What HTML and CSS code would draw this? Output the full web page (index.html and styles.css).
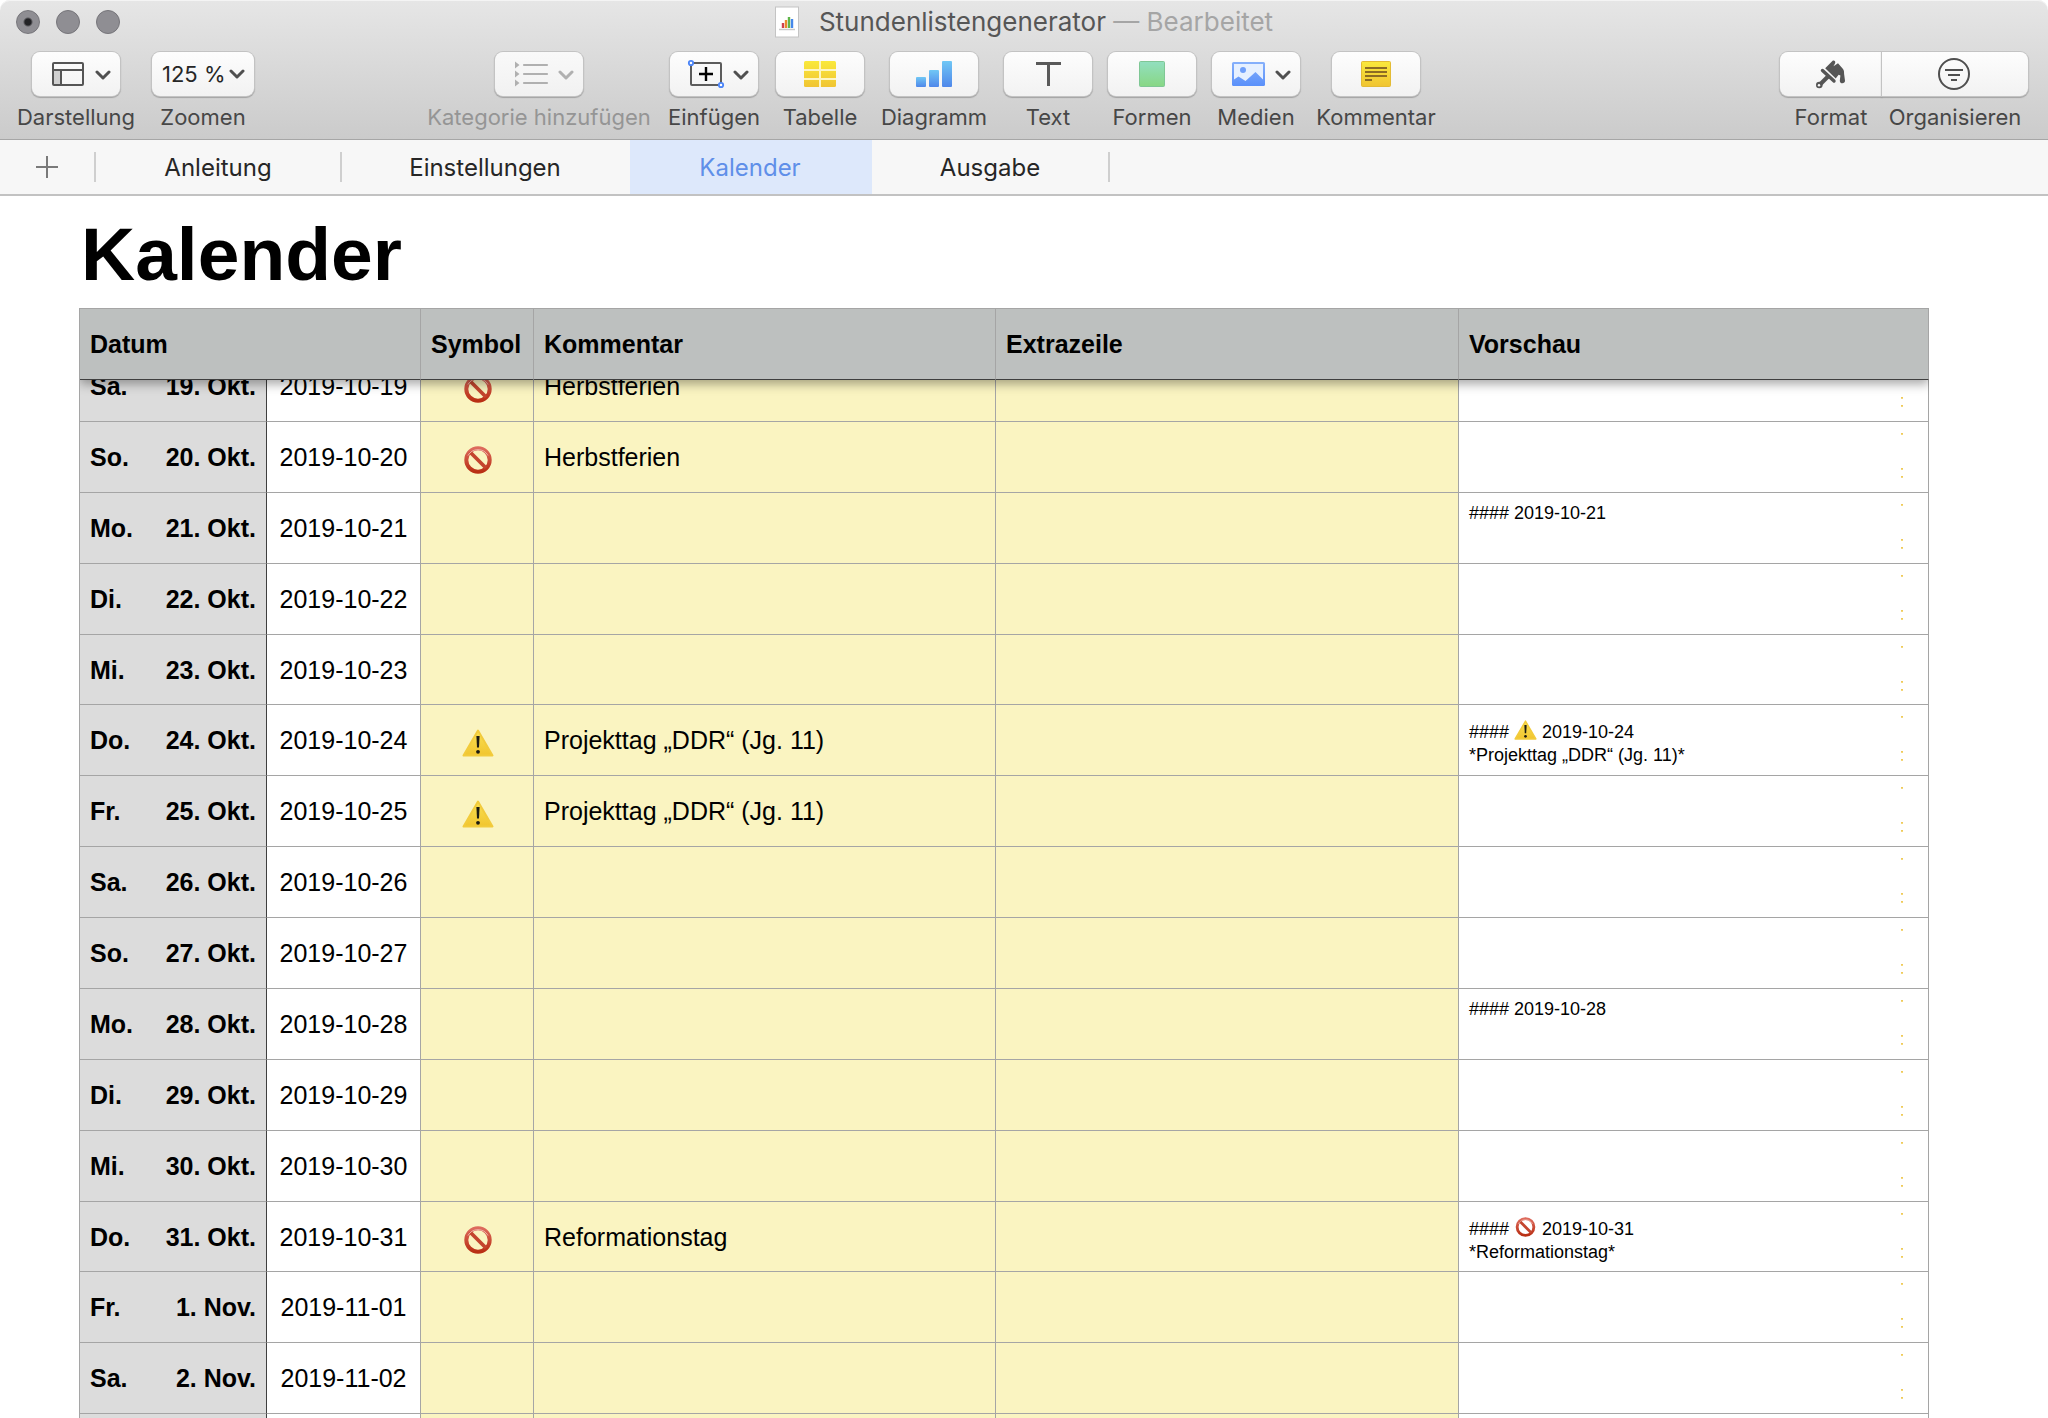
FILE: index.html
```html
<!DOCTYPE html>
<html lang="de">
<head>
<meta charset="utf-8">
<title>Stundenlistengenerator</title>
<link rel="stylesheet" href="styles.css">
</head>
<body>
<svg class="defs" aria-hidden="true">
  <defs>
    <linearGradient id="g-yellow" x1="0" y1="0" x2="0" y2="1"><stop offset="0" stop-color="#fae93c"/><stop offset="1" stop-color="#f0c432"/></linearGradient>
    <linearGradient id="g-blue" x1="0" y1="0" x2="0" y2="1"><stop offset="0" stop-color="#70c7f5"/><stop offset="1" stop-color="#4f87ea"/></linearGradient>
    <linearGradient id="g-media" x1="0" y1="0" x2="0" y2="1"><stop offset="0" stop-color="#86b0fb"/><stop offset="1" stop-color="#5a90fa"/></linearGradient>
    <linearGradient id="g-green" x1="0" y1="0" x2="0" y2="1"><stop offset="0" stop-color="#92dfc0"/><stop offset="1" stop-color="#88d784"/></linearGradient>
    <linearGradient id="g-warn" x1="0" y1="0" x2="0" y2="1"><stop offset="0" stop-color="#f9e052"/><stop offset="1" stop-color="#f1c52f"/></linearGradient>
    <linearGradient id="g-ban" x1="0" y1="0" x2="0" y2="1"><stop offset="0" stop-color="#dd6a5c"/><stop offset="1" stop-color="#b92f14"/></linearGradient>
    <symbol id="ban" viewBox="0 0 28 28">
      <circle cx="14" cy="14" r="11.7" fill="none" stroke="url(#g-ban)" stroke-width="4"/>
      <path d="M6 6l16 16" stroke="#c4452e" stroke-width="3.8"/>
      <path d="M4 9.500A11.500 11.500 0 0 1 24 9.500" fill="none" stroke="#f0b3a8" stroke-width="1"/>
    </symbol>
    <symbol id="warn" viewBox="0 0 32 28">
      <path d="M16 1.500L30.500 26.500H1.500z" fill="url(#g-warn)" stroke="#f2cb3c" stroke-width="2" stroke-linejoin="round"/>
      <path d="M14.400 7h3.200l-.6 11.500h-2z" fill="#1b1a12"/>
      <circle cx="16" cy="22.800" r="1.900" fill="#1b1a12"/>
    </symbol>
    <symbol id="chevron" viewBox="0 0 16 10"><path d="M2 2l6 6 6-6" fill="none" stroke="currentColor" stroke-width="3" stroke-linecap="round" stroke-linejoin="round"/></symbol>
  </defs>
</svg>

<header class="chrome">
  <div class="titlebar">
    <div class="lights">
      <button class="light light-edited" aria-label="Schließen"></button>
      <button class="light" aria-label="Minimieren"></button>
      <button class="light" aria-label="Vergrößern"></button>
    </div>
    <svg class="doc-icon" viewBox="0 0 24 32" aria-hidden="true">
      <rect x="0.500" y="1" width="23" height="30" fill="#fff" stroke="#c4c4c4"/>
      <path d="M4 23.500h16" stroke="#c9c9c9" stroke-width="1.500"/>
      <path d="M8 17v5" stroke="#d0404d" stroke-width="2.400"/>
      <path d="M11 14v8" stroke="#e98a2d" stroke-width="2.400"/>
      <path d="M14 11v11" stroke="#5fb548" stroke-width="2.400"/>
      <path d="M17 13v9" stroke="#4688ea" stroke-width="2.400"/>
    </svg>
    <div class="title">Stundenlistengenerator <span class="title-state">— Bearbeitet</span></div>
  </div>

  <div class="toolbar">
    <div class="tool-group">
      <button class="tool tool-view">
        <span class="face"><svg width="88" height="44" viewBox="0 0 88 44" aria-hidden="true">
          <path d="M22 19h6v13h-6z" fill="#cfcfcf"/>
          <rect x="21" y="11" width="30" height="22" rx="1" fill="none" stroke="#555" stroke-width="2"/>
          <path d="M21 18h30M29 18v15" stroke="#555" stroke-width="2"/>
          <use href="#chevron" x="63" y="18" width="16" height="10"/>
        </svg></span>
        <span class="label">Darstellung</span>
      </button>
      <div class="tool tool-zoom">
        <span class="face face-select">
          <select class="zoom-select" id="zoom"><option>125 %</option></select>
          <svg class="zoom-chevron" width="16" height="10" aria-hidden="true"><use href="#chevron"/></svg>
        </span>
        <label class="label" for="zoom">Zoomen</label>
      </div>
    </div>
    <div class="spacer"></div>
    <div class="tool-group">
      <button class="tool tool-category" disabled>
        <span class="face"><svg width="88" height="44" viewBox="0 0 88 44" aria-hidden="true">
          <path d="M20 9.500l4.500 3.500-4.500 3.500zM20 18.500l4.500 3.500-4.500 3.500zM20 27.500l4.500 3.500-4.500 3.500z" fill="currentColor"/>
          <path d="M29 13h23M29 22h23M29 31h23" stroke="currentColor" stroke-width="2.200" stroke-linecap="round"/>
          <use href="#chevron" x="63" y="18" width="16" height="10"/>
        </svg></span>
        <span class="label">Kategorie hinzufügen</span>
      </button>
      <button class="tool tool-insert">
        <span class="face"><svg width="88" height="44" viewBox="0 0 88 44" aria-hidden="true">
          <rect x="21" y="11" width="30" height="22" rx="1" fill="none" stroke="#5c5c5c" stroke-width="2"/>
          <path d="M36 15v14M29 22h14" stroke="#000" stroke-width="2.400"/>
          <circle cx="21" cy="11" r="2.200" fill="#fff" stroke="#4a84f7" stroke-width="1.800"/>
          <circle cx="51" cy="33" r="2.200" fill="#fff" stroke="#4a84f7" stroke-width="1.800"/>
          <use href="#chevron" x="63" y="18" width="16" height="10"/>
        </svg></span>
        <span class="label">Einfügen</span>
      </button>
      <button class="tool">
        <span class="face"><svg width="88" height="44" viewBox="0 0 88 44" aria-hidden="true">
          <rect x="28" y="9" width="32" height="26" rx="1.500" fill="url(#g-yellow)"/>
          <path d="M44 9v26M28 18h32M28 27h32" stroke="#fdf6c4" stroke-width="2"/>
        </svg></span>
        <span class="label">Tabelle</span>
      </button>
      <button class="tool tool-chart">
        <span class="face"><svg width="88" height="44" viewBox="0 0 88 44" aria-hidden="true">
          <rect x="26" y="25" width="10" height="10" rx="1" fill="url(#g-blue)"/>
          <rect x="39" y="18" width="10" height="17" rx="1" fill="url(#g-blue)"/>
          <rect x="52" y="9" width="10" height="26" rx="1" fill="url(#g-blue)"/>
        </svg></span>
        <span class="label">Diagramm</span>
      </button>
      <button class="tool">
        <span class="face"><svg width="88" height="44" viewBox="0 0 88 44" aria-hidden="true">
          <path d="M32 11.500h25M44.500 11.500V34" stroke="#5a5a5a" stroke-width="3"/>
        </svg></span>
        <span class="label">Text</span>
      </button>
      <button class="tool">
        <span class="face"><svg width="88" height="44" viewBox="0 0 88 44" aria-hidden="true">
          <rect x="31.500" y="9.500" width="25" height="25" rx="1" fill="url(#g-green)" stroke="#7fc795"/>
        </svg></span>
        <span class="label">Formen</span>
      </button>
      <button class="tool">
        <span class="face"><svg width="88" height="44" viewBox="0 0 88 44" aria-hidden="true">
          <rect x="20" y="10" width="33" height="24" rx="1.500" fill="url(#g-media)"/>
          <path d="M22 12h29v15.500L43.500 20 33.500 29l-7-4.500-4.500 3z" fill="#e6f0ff"/>
          <circle cx="31" cy="18" r="3" fill="#6f9ffa"/>
          <use href="#chevron" x="63" y="18" width="16" height="10"/>
        </svg></span>
        <span class="label">Medien</span>
      </button>
      <button class="tool tool-comment">
        <span class="face"><svg width="88" height="44" viewBox="0 0 88 44" aria-hidden="true">
          <rect x="29.500" y="9.500" width="29" height="25" rx="1" fill="url(#g-yellow)" stroke="#e3bb35"/>
          <path d="M33 16h22M33 20h22M33 24h22M33 28h7" stroke="#8c6c24" stroke-width="2"/>
        </svg></span>
        <span class="label">Kommentar</span>
      </button>
    </div>
    <div class="spacer spacer-wide"></div>
    <div class="segments">
      <button class="tool tool-format">
        <span class="face face-first"><svg width="44" height="44" viewBox="0 0 44 44" aria-hidden="true">
          <path d="M10.500 33L18.500 25" stroke="#555" stroke-width="4" stroke-linecap="round"/>
          <circle cx="10.300" cy="33" r="3.300" fill="#555"/>
          <circle cx="10" cy="33.300" r="1.200" fill="#fafafa"/>
          <path d="M13.500 18.500L25 29" stroke="#555" stroke-width="3.400" stroke-linecap="round"/>
          <path d="M16.200 16.200L23.400 9c1.500-1.200 3.600.4 2.700 2.200L24.500 14.300 29 11.300 34 17c1.200 1.500 1 3 1.100 5l.9 6.500c.3 3.600-5.300 3.700-5.200.2l.6-5.200-1.800-.7-2.900 3.700z" fill="#555"/>
        </svg></span>
        <span class="label">Format</span>
      </button>
      <button class="tool tool-organize">
        <span class="face face-last"><svg width="44" height="44" viewBox="0 0 44 44" aria-hidden="true">
          <circle cx="21" cy="22" r="15" fill="none" stroke="#4f4f4f" stroke-width="2"/>
          <path d="M12 18h18M15 23h12M18 28h6" stroke="#4f4f4f" stroke-width="2"/>
        </svg></span>
        <span class="label">Organisieren</span>
      </button>
    </div>
  </div>
</header>

<nav class="sheets">
  <button class="sheet-add" aria-label="Blatt hinzufügen"><svg width="22" height="22" viewBox="0 0 22 22" aria-hidden="true"><path d="M11 0v22M0 11h22" stroke="#7a7a7a" stroke-width="2"/></svg></button>
  <a class="sheet" href="#anleitung">Anleitung</a>
  <a class="sheet" href="#einstellungen">Einstellungen</a>
  <a class="sheet sheet-active" href="#kalender" aria-current="page">Kalender</a>
  <a class="sheet sheet-end" href="#ausgabe">Ausgabe</a>
</nav>

<main class="canvas" id="kalender">
  <h1 class="heading">Kalender</h1>
  <table class="calendar">
    <thead class="head">
      <tr class="row">
        <th class="cell cell-span" colspan="2" scope="colgroup">Datum</th>
        <th class="cell" scope="col">Symbol</th>
        <th class="cell" scope="col">Kommentar</th>
        <th class="cell" scope="col">Extrazeile</th>
        <th class="cell" scope="col">Vorschau</th>
      </tr>
    </thead>
    <tbody class="body">
      <tr class="row"><th class="cell day" scope="row"><span>Sa.</span><span>19. Okt.</span></th><td class="cell date">2019-10-19</td><td class="cell mark"><svg class="ban" role="img" aria-label="Frei"><use href="#ban"/></svg></td><td class="cell entry">Herbstferien</td><td class="cell entry"></td><td class="cell preview"></td></tr>
      <tr class="row"><th class="cell day" scope="row"><span>So.</span><span>20. Okt.</span></th><td class="cell date">2019-10-20</td><td class="cell mark"><svg class="ban" role="img" aria-label="Frei"><use href="#ban"/></svg></td><td class="cell entry">Herbstferien</td><td class="cell entry"></td><td class="cell preview"></td></tr>
      <tr class="row"><th class="cell day" scope="row"><span>Mo.</span><span>21. Okt.</span></th><td class="cell date">2019-10-21</td><td class="cell mark"></td><td class="cell entry"></td><td class="cell entry"></td><td class="cell preview"><div>#### 2019-10-21</div></td></tr>
      <tr class="row"><th class="cell day" scope="row"><span>Di.</span><span>22. Okt.</span></th><td class="cell date">2019-10-22</td><td class="cell mark"></td><td class="cell entry"></td><td class="cell entry"></td><td class="cell preview"></td></tr>
      <tr class="row row-short"><th class="cell day" scope="row"><span>Mi.</span><span>23. Okt.</span></th><td class="cell date">2019-10-23</td><td class="cell mark"></td><td class="cell entry"></td><td class="cell entry"></td><td class="cell preview"></td></tr>
      <tr class="row"><th class="cell day" scope="row"><span>Do.</span><span>24. Okt.</span></th><td class="cell date">2019-10-24</td><td class="cell mark"><svg class="warn" role="img" aria-label="Achtung"><use href="#warn"/></svg></td><td class="cell entry">Projekttag „DDR“ (Jg. 11)</td><td class="cell entry"></td><td class="cell preview"><div>#### <svg class="inline-mark" role="img" aria-label="Achtung"><use href="#warn"/></svg> 2019-10-24</div><div>*Projekttag „DDR“ (Jg. 11)*</div></td></tr>
      <tr class="row"><th class="cell day" scope="row"><span>Fr.</span><span>25. Okt.</span></th><td class="cell date">2019-10-25</td><td class="cell mark"><svg class="warn" role="img" aria-label="Achtung"><use href="#warn"/></svg></td><td class="cell entry">Projekttag „DDR“ (Jg. 11)</td><td class="cell entry"></td><td class="cell preview"></td></tr>
      <tr class="row"><th class="cell day" scope="row"><span>Sa.</span><span>26. Okt.</span></th><td class="cell date">2019-10-26</td><td class="cell mark"></td><td class="cell entry"></td><td class="cell entry"></td><td class="cell preview"></td></tr>
      <tr class="row"><th class="cell day" scope="row"><span>So.</span><span>27. Okt.</span></th><td class="cell date">2019-10-27</td><td class="cell mark"></td><td class="cell entry"></td><td class="cell entry"></td><td class="cell preview"></td></tr>
      <tr class="row"><th class="cell day" scope="row"><span>Mo.</span><span>28. Okt.</span></th><td class="cell date">2019-10-28</td><td class="cell mark"></td><td class="cell entry"></td><td class="cell entry"></td><td class="cell preview"><div>#### 2019-10-28</div></td></tr>
      <tr class="row"><th class="cell day" scope="row"><span>Di.</span><span>29. Okt.</span></th><td class="cell date">2019-10-29</td><td class="cell mark"></td><td class="cell entry"></td><td class="cell entry"></td><td class="cell preview"></td></tr>
      <tr class="row"><th class="cell day" scope="row"><span>Mi.</span><span>30. Okt.</span></th><td class="cell date">2019-10-30</td><td class="cell mark"></td><td class="cell entry"></td><td class="cell entry"></td><td class="cell preview"></td></tr>
      <tr class="row row-short"><th class="cell day" scope="row"><span>Do.</span><span>31. Okt.</span></th><td class="cell date">2019-10-31</td><td class="cell mark"><svg class="ban" role="img" aria-label="Frei"><use href="#ban"/></svg></td><td class="cell entry">Reformationstag</td><td class="cell entry"></td><td class="cell preview"><div>#### <svg class="inline-mark" role="img" aria-label="Frei"><use href="#ban"/></svg> 2019-10-31</div><div>*Reformationstag*</div></td></tr>
      <tr class="row"><th class="cell day" scope="row"><span>Fr.</span><span>1. Nov.</span></th><td class="cell date">2019-11-01</td><td class="cell mark"></td><td class="cell entry"></td><td class="cell entry"></td><td class="cell preview"></td></tr>
      <tr class="row"><th class="cell day" scope="row"><span>Sa.</span><span>2. Nov.</span></th><td class="cell date">2019-11-02</td><td class="cell mark"></td><td class="cell entry"></td><td class="cell entry"></td><td class="cell preview"></td></tr>
      <tr class="row"><th class="cell day" scope="row"></th><td class="cell date"></td><td class="cell mark"></td><td class="cell entry"></td><td class="cell entry"></td><td class="cell preview"></td></tr>
    </tbody>
  </table>
</main>
</body>
</html>
```
FILE: styles.css
```css
* { box-sizing: border-box; }

body {
  margin: 0;
  height: 100vh;
  display: flex;
  flex-direction: column;
  overflow: hidden;
  background: #fff;
  color: #000;
  font-family: "Liberation Sans", Arial, sans-serif;
}

button, select {
  margin: 0;
  padding: 0;
  border: 0;
  background: none;
  color: inherit;
  font: inherit;
}

svg { display: block; }
.defs { position: absolute; width: 0; height: 0; }

/* Window chrome */
.chrome, .sheets { font-family: Inter, sans-serif; flex: none; }

.chrome {
  height: 140px;
  border-bottom: 1px solid #a6a6a6;
  border-radius: 10px 10px 0 0;
  background: linear-gradient(#e6e6e6, #cbcbcb);
  box-shadow: inset 0 1px 0 #f4f4f4;
}

.titlebar {
  position: relative;
  display: flex;
  align-items: center;
  justify-content: center;
  gap: 20px;
  height: 44px;
}

.lights {
  position: absolute;
  left: 16px;
  top: 10px;
  display: flex;
  gap: 16px;
}

.light {
  width: 24px;
  height: 24px;
  border: 1px solid #76757a;
  border-radius: 50%;
  background: #8f8e93;
}

.light-edited { background: radial-gradient(circle, #232326 3px, #8f8e93 5px); }

.doc-icon { width: 24px; height: 32px; }

.title {
  color: #565656;
  font-size: 26px;
  line-height: 32px;
}

.title-state { color: #a5a5a5; }

.toolbar {
  display: flex;
  padding: 8px 20px 0 16px;
}

.tool-group { display: flex; gap: 16px; }
.spacer { flex: 1; }
.spacer-wide { flex: 2; }
.segments { display: flex; }

.tool {
  display: flex;
  flex-direction: column;
  align-items: center;
  gap: 6px;
  width: 88px;
  color: #505050;
}

.tool-view { width: 120px; }
.tool-zoom { width: 102px; }
.tool-category { width: 226px; color: #b0b0b0; }
.tool-insert { width: 92px; }
.tool-chart { width: 108px; }
.tool-comment { width: 120px; }
.tool-format { width: 102px; }
.tool-organize { width: 146px; }

.face {
  display: flex;
  justify-content: center;
  width: 88px;
  height: 44px;
  border-radius: 8px;
  background: linear-gradient(#fdfdfd, #f2f2f2);
  box-shadow: 0 0 0 1px #c3c3c3, 0 1px 1px 1px #a2a2a2;
}

.tool-category .face { background: linear-gradient(#f9f9f9, #f1f1f1); }

.segments .face { width: 100%; }
.face-first { border-radius: 8px 0 0 8px; }
.face-last { border-radius: 0 8px 8px 0; }

.label {
  color: #474747;
  font-size: 22px;
  line-height: 30px;
  white-space: nowrap;
}

.tool-category .label { color: #959595; }

.face-select {
  display: grid;
  grid-template-columns: 1fr;
  align-items: center;
  width: 100%;
}

.zoom-select, .zoom-chevron { grid-area: 1 / 1; }

.zoom-select {
  appearance: none;
  width: 100%;
  height: 44px;
  padding-left: 10px;
  color: #262626;
  font-size: 22px;
}

.zoom-chevron { justify-self: end; margin-right: 9px; }

/* Sheet tabs */
.sheets {
  display: grid;
  grid-template-columns: 96px 246px 288px 242px 238px;
  height: 56px;
  border-bottom: 2px solid #c2c2c2;
  background: #f7f7f7;
}

.sheet-add, .sheet {
  display: flex;
  align-items: center;
  justify-content: center;
  padding: 2px 2px 0 0;
  color: #262626;
  font-size: 24px;
  line-height: 30px;
  text-decoration: none;
}

.sheet-add { padding-top: 0; }

.sheet-add, .sheet:nth-child(2), .sheet-end {
  background: linear-gradient(#cfcfcf, #cfcfcf) right center / 2px 30px no-repeat;
}

.sheet-active { background: #dde8fb; color: #5f8fe9; }

/* Sheet content */
.canvas {
  flex: 1;
  min-height: 0;
  overflow: hidden;
  padding: 16px 119px 0 79px;
}

.heading {
  margin: 0 0 12px;
  padding-left: 2px;
  font-size: 75px;
  font-weight: bold;
  line-height: 84px;
}

.calendar {
  display: block;
  border-left: 1px solid #a5a5a5;
  border-top: 1px solid #a5a5a5;
  font-size: 25px;
  line-height: 30px;
}

.head, .body { display: block; }

.head {
  position: relative;
  z-index: 1;
  background: #bdc0bf;
  box-shadow: 0 4px 10px rgba(0, 0, 0, .35);
  clip-path: inset(0 0 -20px 0);
}

/* The first day is partly scrolled under the header. */
.body { margin-top: -29px; }

.row {
  display: grid;
  grid-template-columns: 187px 154px 113px 462fr 463fr 470fr;
  height: 71px;
}

.row-short { height: 70px; }

.cell {
  display: flex;
  align-items: center;
  min-width: 0;
  padding: 0 10px;
  border-right: 1px solid #a5a5a5;
  border-bottom: 1px solid #a5a5a5;
  text-align: left;
  white-space: nowrap;
}

.cell-span { grid-column: span 2; }
.head .cell { border-bottom-color: #3f3f3f; }

.day {
  justify-content: space-between;
  border-right-color: #3f3f3f;
  background: #dcdcdc;
}

.date { justify-content: center; }
.mark, .entry { background: #faf4c1; }
.mark { justify-content: center; padding: 6px 10px 0 12px; }

.ban { width: 28px; height: 28px; }
.warn { width: 32px; height: 28px; }

.preview {
  display: block;
  padding-top: 9px;
  font-size: 18px;
  line-height: 23px;
  background:
    linear-gradient(#ecc24a, #f6df8c) right 25px top 11px / 2px 2px no-repeat,
    linear-gradient(#ecc24a, #f6df8c) right 25px top 46px / 2px 2px no-repeat,
    linear-gradient(#ecc24a, #f6df8c) right 25px top 54px / 2px 2px no-repeat;
}

.inline-mark {
  display: inline-block;
  width: 23px;
  height: 20px;
  margin-top: 6px;
  vertical-align: -2px;
}
```
